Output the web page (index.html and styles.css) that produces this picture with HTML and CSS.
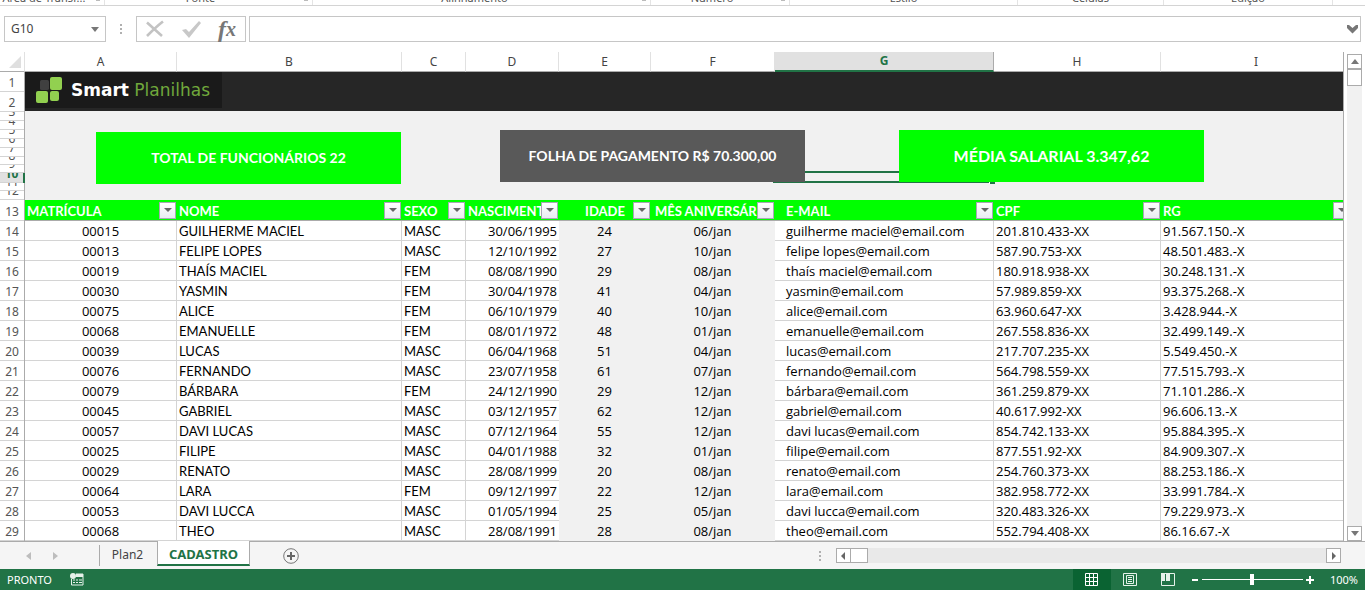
FILE: index.html
```
<!DOCTYPE html>
<html lang="pt-BR">
<head>
<meta charset="utf-8">
<meta name="viewport" content="width=device-width, initial-scale=1">
<title>Smart Planilhas - Cadastro</title>
<link rel="stylesheet" href="styles.css">
</head>
<body>
<div class="ribbon">
  <div class="group g-clip"><span>Área de Transf...</span><i></i></div>
  <div class="group g-font"><span>Fonte</span><i></i></div>
  <div class="group g-align"><span>Alinhamento</span><i></i></div>
  <div class="group g-num"><span>Número</span><i></i></div>
  <div class="group g-style"><span>Estilo</span></div>
  <div class="group g-cells"><span>Células</span></div>
  <div class="group g-edit"><span>Edição</span></div>
</div>
<div class="formula-row">
  <div class="namebox">
    <input class="name-input" type="text" value="G10" aria-label="Caixa de nome">
    <button class="plain" aria-label="Abrir nomes"><svg width="8" height="5" viewBox="0 0 8 5"><path d="M0 0h8L4 5z" fill="#777"/></svg></button>
  </div>
  <span class="dots"><b></b><b></b><b></b></span>
  <div class="fx-tools">
    <button class="plain" aria-label="Cancelar"><svg width="20" height="18" viewBox="0 0 20 18"><path d="M1 2.500L16 16M17 1.500C11 6 6 11 1 16" fill="none" stroke="#c3c3c3" stroke-width="2.600"/></svg></button>
    <button class="plain" aria-label="Inserir"><svg width="20" height="18" viewBox="0 0 20 18"><path d="M0 10l4-1 3 3L17 1l2 2L7 18z" fill="#c8c8c8"/></svg></button>
    <button class="plain fx" aria-label="Inserir função">f<span>x</span></button>
  </div>
  <div class="formula">
    <input class="formula-input" type="text" aria-label="Barra de fórmulas">
    <button class="plain" aria-label="Expandir"><svg width="11" height="9" viewBox="0 0 11 9"><path d="M0 0h2l3.500 3L9 0h2v3L5.500 8.500 0 3z" fill="#777"/></svg></button>
  </div>
</div>
<main class="work">
  <div class="sheet">
    <table class="grid">
      <colgroup><col class="w-n"><col class="w-a"><col class="w-b"><col class="w-c"><col class="w-d"><col class="w-e"><col class="w-f"><col class="w-g"><col class="w-h"><col></colgroup>
      <thead>
        <tr class="letters"><th class="corner"><svg width="12" height="12" viewBox="0 0 12 12"><path d="M12 0v12H0z" fill="#dfdfdf"/></svg></th><th>A</th><th>B</th><th>C</th><th>D</th><th>E</th><th>F</th><th class="on">G</th><th>H</th><th>I</th></tr>
      </thead>
      <tbody id="rows">
        <tr><th class="num"><div class="h20">1</div></th>
          <td class="banner" colspan="9" rowspan="2"><div class="logo">
            <svg width="28" height="27" viewBox="0 0 28 27"><rect x="5" y="3" width="9" height="10" rx="1.500" fill="#404040"/><rect x="15" y="0" width="12" height="13" rx="2" fill="#92d050"/><rect x="1" y="14" width="12" height="12" rx="2" fill="#92d050"/><rect x="15" y="14" width="9" height="10" rx="2" fill="#92d050"/></svg>
            <span class="brand"><b>Smart</b> Planilhas</span></div></td></tr>
        <tr><th class="num"><div class="h20">2</div></th></tr>
        <tr><th class="num"><div class="h9">3</div></th>
          <td class="panel" colspan="9" rowspan="10"><div class="cards">
            <div class="selection"></div>
            <div class="card first">TOTAL DE FUNCIONÁRIOS 22</div>
            <div class="card dark">FOLHA DE PAGAMENTO R$ 70.300,00</div>
            <div class="card large">MÉDIA SALARIAL 3.347,62</div>
          </div></td></tr>
        <tr><th class="num"><div class="h9">4</div></th></tr>
        <tr><th class="num"><div class="h9">5</div></th></tr>
        <tr><th class="num"><div class="h9">6</div></th></tr>
        <tr><th class="num"><div class="h9">7</div></th></tr>
        <tr><th class="num"><div class="h8">8</div></th></tr>
        <tr><th class="num"><div class="h8">9</div></th></tr>
        <tr><th class="num on"><div class="h10">10</div></th></tr>
        <tr><th class="num"><div class="h8">11</div></th></tr>
        <tr><th class="num"><div class="h9">12</div></th></tr>
      </tbody>
    </table>
  </div>
  <div class="vscroll">
    <button class="sb" aria-label="Rolar para cima"><svg width="8" height="5" viewBox="0 0 8 5"><path d="M0 5h8L4 0z" fill="#777"/></svg></button>
    <div class="track"><div class="thumb"></div></div>
    <button class="sb" aria-label="Rolar para baixo"><svg width="8" height="5" viewBox="0 0 8 5"><path d="M0 0h8L4 5z" fill="#777"/></svg></button>
  </div>
</main>
<div class="tabs">
  <div class="nav">
    <button class="plain" aria-label="Planilha anterior"><svg width="5" height="8" viewBox="0 0 5 8"><path d="M5 0v8L0 4z" fill="#bdbdbd"/></svg></button>
    <button class="plain" aria-label="Próxima planilha"><svg width="5" height="8" viewBox="0 0 5 8"><path d="M0 0v8l5-4z" fill="#bdbdbd"/></svg></button>
  </div>
  <button class="tab">Plan2</button>
  <button class="tab active">CADASTRO</button>
  <button class="plain add" aria-label="Nova planilha"><svg width="16" height="16" viewBox="0 0 16 16"><circle cx="8" cy="8" r="7.300" fill="none" stroke="#777"/><path d="M8 4v8M4 8h8" stroke="#666" stroke-width="2"/></svg></button>
  <span class="dots"><b></b><b></b><b></b></span>
  <div class="hscroll">
    <button class="sb" aria-label="Rolar para a esquerda"><svg width="4" height="8" viewBox="0 0 4 8"><path d="M4 0v8L0 4z" fill="#666"/></svg></button>
    <div class="track"><div class="thumb"></div></div>
    <button class="sb" aria-label="Rolar para a direita"><svg width="4" height="8" viewBox="0 0 4 8"><path d="M0 0v8l4-4z" fill="#666"/></svg></button>
  </div>
</div>
<footer class="status">
  <span class="ready">PRONTO</span>
  <svg class="macro" width="14" height="13" viewBox="0 0 14 13"><path d="M6 1h7v11H1.500V6" fill="none" stroke="#e6f2ea"/><path d="M6 1h7v3H6z" fill="#e6f2ea"/><circle cx="3" cy="3" r="3" fill="#e6f2ea"/><path d="M3 7h2M6 7h2M9 7h3M3 9.500h2M6 9.500h2M9 9.500h3" stroke="#e6f2ea"/></svg>
  <div class="views">
    <button class="view on" aria-label="Normal"><svg width="13" height="13" viewBox="0 0 13 13"><path d="M.5.500h12v12H.5zM4.500 0v13M8.500 0v13M0 4.500h13M0 8.500h13" fill="none" stroke="#fff"/></svg></button>
    <button class="view" aria-label="Layout da página"><svg width="14" height="13" viewBox="0 0 14 13"><path d="M.5.500h13v12H.5zM3.500 2.500h7v8h-7zM5 4.500h4M5 6.500h4M5 8.500h4" fill="none" stroke="#e6f2ea"/></svg></button>
    <button class="view" aria-label="Quebra de página"><svg width="14" height="13" viewBox="0 0 14 13"><path d="M.5.500h13v12H.5z" fill="none" stroke="#e6f2ea"/><path d="M0 0h4v8H0zM5 0h4v8H5z" fill="#e6f2ea"/></svg></button>
  </div>
  <div class="zoom">
    <button class="plain" aria-label="Reduzir"><svg width="8" height="8" viewBox="0 0 8 8"><path d="M1 4h6" stroke="#fff" stroke-width="2"/></svg></button>
    <input class="slider" type="range" min="0" max="200" value="100" aria-label="Zoom">
    <button class="plain" aria-label="Ampliar"><svg width="8" height="8" viewBox="0 0 8 8"><path d="M0 4h8M4 0v8" stroke="#fff" stroke-width="2"/></svg></button>
  </div>
  <span class="pct">100%</span>
</footer>
<script src="sheet.js"></script>
</body>
</html>
```
FILE: styles.css
```
* { box-sizing: border-box; }
body {
  margin: 0;
  min-height: 100vh;
  display: flex;
  flex-direction: column;
  background: #fff;
  color: #444;
  font: 12px/16px "Noto Sans", "Open Sans", sans-serif;
  overflow: hidden;
}
button, input { font: inherit; color: inherit; }
.plain { border: 0; padding: 0; background: none; display: flex; align-items: center; justify-content: center; }

.ribbon { display: flex; height: 6px; border-bottom: 1px solid #d4d4d4; overflow: hidden; font-size: 11px; color: #555; }
.group { display: flex; align-items: flex-end; justify-content: center; height: 5px; padding-right: 16px; border-right: 1px solid #e4e4e4; position: relative; }
.group span { flex: none; white-space: nowrap; height: 15px; line-height: 16px; }
.group i { position: absolute; right: 4px; top: 0; width: 4px; height: 1px; background: #bbb; }
.g-clip { width: 105px; }
.g-font { width: 208px; }
.g-align { width: 338px; padding-right: 14px; }
.g-num { width: 139px; }
.g-style { width: 228px; padding-right: 0; }
.g-cells { width: 146px; padding-right: 0; }
.g-edit { width: 169px; padding-right: 0; }

.formula-row { display: flex; align-items: center; padding: 10px 4px; }
.namebox { display: flex; width: 102px; height: 26px; border: 1px solid #c6c6c6; padding: 0 6px; }
.name-input { flex: 1; min-width: 0; border: 0; padding: 0; outline: 0; background: none; }
.dots { display: flex; flex-direction: column; gap: 2px; width: 30px; align-items: center; }
.dots b { width: 2px; height: 2px; background: #b0b0b0; }
.fx-tools { display: flex; justify-content: space-between; width: 110px; height: 26px; padding: 0 9px; border: 1px solid #c6c6c6; margin-right: 3px; }
.fx { font: italic bold 24px/24px "Liberation Serif", serif; color: #777; }
.fx span { font-size: 20px; }
.formula { display: flex; flex: 1; height: 26px; border: 1px solid #c6c6c6; padding-right: 2px; }
.formula-input { flex: 1; border: 0; padding: 0 6px; outline: 0; background: none; }

.work { display: flex; flex: 1; }
.sheet { flex: 1; min-width: 0; overflow: hidden; border-right: 1px solid #ababab; }
.grid { width: 100%; table-layout: fixed; border-collapse: separate; border-spacing: 0; }
.grid th, .grid td { padding: 0; }
.w-n { width: 25px; }
.w-a { width: 152px; }
.w-b { width: 225px; }
.w-c { width: 64px; }
.w-d { width: 93px; }
.w-e { width: 92px; }
.w-f { width: 124px; }
.w-g { width: 219px; }
.w-h { width: 167px; }
.letters th { height: 20px; line-height: 19px; font-weight: 400; border-right: 1px solid #e1e1e1; border-bottom: 1px solid #ababab; }
.letters .on { background: #e1e1e1; color: #217346; font-weight: 700; line-height: 18px; border-bottom: 2px solid #217346; border-right-color: #ababab; }
.letters th:last-child { border-right: 0; padding-left: 8px; }
.letters .corner { text-align: right; padding-right: 3px; line-height: 0; vertical-align: bottom; padding-bottom: 3px; }
.num { font-weight: 400; color: #555; border-right: 1px solid #ababab; }
.num div { display: flex; align-items: flex-end; justify-content: center; overflow: hidden; border-bottom: 1px solid #d4d4d4; line-height: 17px; }
.num.on { background: #e1e1e1; color: #217346; font-weight: 700; border-right: 2px solid #217346; }
.h20 { height: 20px; }
.h10 { height: 10px; }
.h9 { height: 9px; }
.h8 { height: 8px; }

.banner { background: #262626; vertical-align: top; border-bottom: 1px solid #f1f1f1; }
.logo { display: flex; align-items: center; gap: 8px; width: 197px; height: 36px; padding-left: 10px; background: #1a1a1a; }
.brand { font: 17px/18px "DejaVu Sans", sans-serif; color: #70a83c; white-space: nowrap; }
.brand b { color: #fff; }
.panel { background: #f1f1f1; vertical-align: top; }
.cards { position: relative; display: flex; align-items: flex-start; height: 88px; padding: 18px 0 0 71px; }
.card { position: relative; flex: none; width: 305px; height: 52px; display: flex; align-items: center; justify-content: center; background: #0f0; color: #fff; font: bold 14px/20px Lato, sans-serif; white-space: nowrap; }
.card.first { margin: 2px 99px 0 0; }
.card.dark { background: #595959; margin-right: 94px; }
.card.large { font-size: 16px; }
.selection { position: absolute; left: 748px; top: 59px; width: 222px; height: 12px; border: 2px solid #217346; }
.selection::after { content: ""; position: absolute; right: -2px; bottom: -3px; width: 5px; height: 4px; background: #217346; border-left: 1px solid #fff; }

.head th { background: #0f0; color: #fff; font: bold 13px/18px Lato, sans-serif; border-bottom: 1px solid #ababab; text-align: left; }
.head th.num { background: #fff; color: #555; font: 12px/17px "Noto Sans", sans-serif; border-bottom: 0; }
.cell { display: flex; height: 20px; padding: 0 1px 0 2px; align-items: center; }
.cell span { flex: 1; min-width: 0; overflow: hidden; white-space: nowrap; padding-top: 2px; }
.k-e .cell { padding-left: 18px; text-align: center; }
.k-f .cell { padding-left: 4px; }
.k-g .cell { padding-left: 11px; }
.k-i .cell { margin-right: -8px; }
.head th.k-i { overflow: hidden; }
.filter { flex: none; width: 17px; height: 17px; padding: 0; border: 1px solid #a8a8b4; background: linear-gradient(#fff, #e8ecf2); display: flex; align-items: center; justify-content: center; }
.data td { height: 20px; padding: 1px 2px 0; color: #000; font: 13px/18px "Open Sans", sans-serif; white-space: nowrap; border-right: 1px solid #d4d4d4; border-bottom: 1px solid #d4d4d4; }
.data .k-b, .data .k-c { font-family: Lato, sans-serif; }
.data .k-a, .data .k-e, .data .k-f { text-align: center; }
.data .k-d { text-align: right; border-right: 0; }
.data .k-e, .data .k-f { background: #f1f1f1; border-color: #f1f1f1; }
.data .k-g { padding-left: 11px; }
.data .k-i { border-right: 0; }

.vscroll { display: flex; flex-direction: column; width: 21px; padding: 2px 3px 0; }
.sb { flex: none; display: flex; align-items: center; justify-content: center; width: 15px; height: 15px; padding: 0; border: 1px solid #ababab; background: #fff; }
.track { flex: 1; background: #f1f1f1; }
.thumb { height: 17px; border: 1px solid #ababab; background: #fff; }

.tabs { display: flex; height: 28px; background: #f5f5f5; border-top: 1px solid #ababab; }
.nav { display: flex; align-items: center; justify-content: space-between; width: 100px; padding: 0 41px 0 26px; margin: 3px 0; border-right: 1px solid #ababab; }
.tab { width: 57px; border: 0; padding: 0 2px 2px 0; background: none; }
.tab.active { width: 93px; height: 25px; margin-top: -1px; border: 1px solid #ababab; border-top: 0; border-bottom: 2px solid #217346; background: #fff; color: #217346; font-weight: 700; font-size: 13px; padding: 2px 0 0; }
.add { width: 16px; margin-left: 33px; }
.tabs .dots { margin-left: auto; justify-content: center; width: 32px; }
.hscroll { display: flex; align-items: center; width: 37%; margin-right: 24px; }
.hscroll .track { height: 15px; background: #e9e9e9; }
.hscroll .thumb { width: 17px; height: 15px; border-left: 0; }

.status { display: flex; align-items: center; height: 21px; padding: 0 7px; background: #217346; color: #fff; font-size: 11px; }
.ready { width: 63px; }
.views { display: flex; margin-left: auto; height: 21px; }
.view { width: 38px; border: 0; padding: 0; background: none; display: flex; align-items: center; justify-content: center; }
.view.on { background: #0a6332; }
.zoom { display: flex; align-items: center; gap: 3px; margin-left: 4px; }
.slider { appearance: none; width: 101px; height: 12px; margin: 0; background: linear-gradient(#fff, #fff) center / 100% 1px no-repeat; }
.slider::-webkit-slider-thumb { appearance: none; width: 4px; height: 11px; background: #fff; }
.pct { margin-left: 16px; }
```
FILE: sheet.js
```
const cols = "abcdefghi".split("");
const titles = ["MATRÍCULA", "NOME", "SEXO", "NASCIMENTO", "IDADE", "MÊS ANIVERSÁRIO", "E-MAIL", "CPF", "RG"];
const people = [
  ["00015", "GUILHERME MACIEL", "MASC", "30/06/1995", "24", "06/jan", "guilherme maciel@email.com", "201.810.433-XX", "91.567.150.-X"],
  ["00013", "FELIPE LOPES", "MASC", "12/10/1992", "27", "10/jan", "felipe lopes@email.com", "587.90.753-XX", "48.501.483.-X"],
  ["00019", "THAÍS MACIEL", "FEM", "08/08/1990", "29", "08/jan", "thaís maciel@email.com", "180.918.938-XX", "30.248.131.-X"],
  ["00030", "YASMIN", "FEM", "30/04/1978", "41", "04/jan", "yasmin@email.com", "57.989.859-XX", "93.375.268.-X"],
  ["00075", "ALICE", "FEM", "06/10/1979", "40", "10/jan", "alice@email.com", "63.960.647-XX", "3.428.944.-X"],
  ["00068", "EMANUELLE", "FEM", "08/01/1972", "48", "01/jan", "emanuelle@email.com", "267.558.836-XX", "32.499.149.-X"],
  ["00039", "LUCAS", "MASC", "06/04/1968", "51", "04/jan", "lucas@email.com", "217.707.235-XX", "5.549.450.-X"],
  ["00076", "FERNANDO", "MASC", "23/07/1958", "61", "07/jan", "fernando@email.com", "564.798.559-XX", "77.515.793.-X"],
  ["00079", "BÁRBARA", "FEM", "24/12/1990", "29", "12/jan", "bárbara@email.com", "361.259.879-XX", "71.101.286.-X"],
  ["00045", "GABRIEL", "MASC", "03/12/1957", "62", "12/jan", "gabriel@email.com", "40.617.992-XX", "96.606.13.-X"],
  ["00057", "DAVI LUCAS", "MASC", "07/12/1964", "55", "12/jan", "davi lucas@email.com", "854.742.133-XX", "95.884.395.-X"],
  ["00025", "FILIPE", "MASC", "04/01/1988", "32", "01/jan", "filipe@email.com", "877.551.92-XX", "84.909.307.-X"],
  ["00029", "RENATO", "MASC", "28/08/1999", "20", "08/jan", "renato@email.com", "254.760.373-XX", "88.253.186.-X"],
  ["00064", "LARA", "FEM", "09/12/1997", "22", "12/jan", "lara@email.com", "382.958.772-XX", "33.991.784.-X"],
  ["00053", "DAVI LUCCA", "MASC", "01/05/1994", "25", "05/jan", "davi lucca@email.com", "320.483.326-XX", "79.229.973.-X"],
  ["00068", "THEO", "MASC", "28/08/1991", "28", "08/jan", "theo@email.com", "552.794.408-XX", "86.16.67.-X"]
];
const arrow = '<svg width="8" height="4" viewBox="0 0 8 4"><path d="M0 0h8L4 4z" fill="#666"/></svg>';
const num = n => `<th class="num"><div class="h20">${n}</div></th>`;
let html = `<tr class="head">${num(13)}` + titles.map((t, i) =>
  `<th class="k-${cols[i]}"><div class="cell"><span>${t}</span><button class="filter" aria-label="Filtrar ${t}">${arrow}</button></div></th>`).join("") + "</tr>";
people.forEach((p, r) => {
  html += `<tr class="data">${num(14 + r)}` + p.map((v, i) => `<td class="k-${cols[i]}">${v}</td>`).join("") + "</tr>";
});
document.getElementById("rows").insertAdjacentHTML("beforeend", html);
```
